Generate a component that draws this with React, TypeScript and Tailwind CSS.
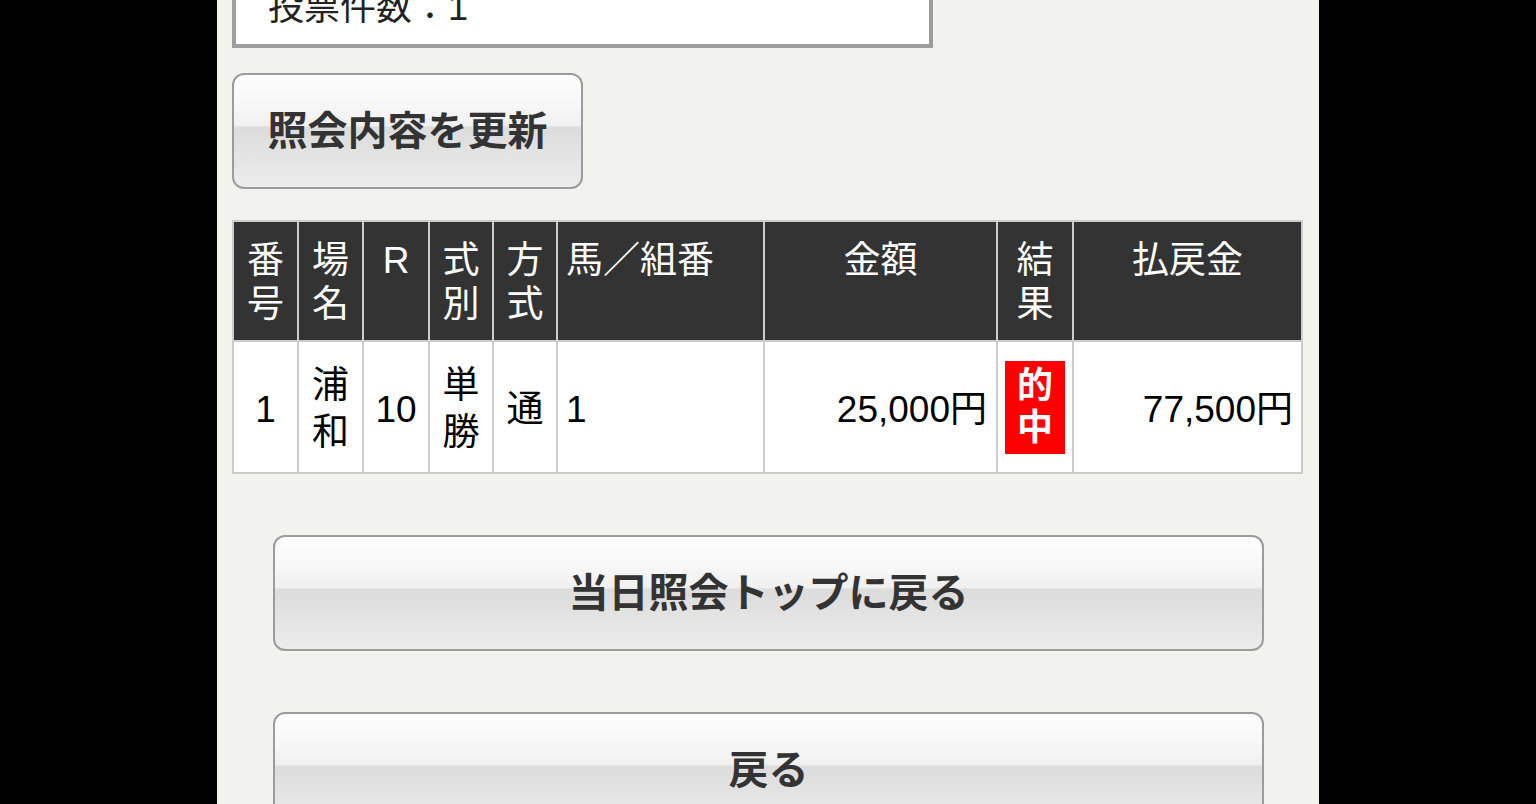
import React from "react";

const btnBg =
  "bg-[linear-gradient(to_bottom,#fefefe_0%,#f6f6f6_30%,#f0f0f0_45%,#dcdcdc_47%,#e3e3e3_70%,#ececec_100%)]";

function GlossButton({ label, className }: { label: string; className: string }) {
  return (
    <div
      className={`flex items-center justify-center rounded-[12px] border-2 border-[#9c9c9c] ${btnBg} text-[40px] font-bold leading-[48px] text-[#333333] ${className}`}
    >
      {label}
    </div>
  );
}

const head = "bg-[#333333] text-white text-[37px] leading-[44px] pt-[17px]";
const body = "bg-white text-black text-[37px] leading-[47px] flex items-center pt-[4px]";

export default function App() {
  return (
    <div className="min-h-[804px] h-[804px] overflow-hidden bg-black font-['Liberation_Sans','Noto_Sans_CJK_JP',sans-serif]">
      <div className="mx-auto flex h-full w-[1102px] flex-col bg-[#f2f2ee]">
        {/* top info box */}
        <div className="-mt-[40px] ml-[15px] h-[88px] w-[701px] shrink-0 border-4 border-[#9d9d9d] bg-white pl-[32px] pt-[22px] text-[36px] leading-[44px] text-[#222]">
          投票件数：1
        </div>

        <GlossButton label="照会内容を更新" className="ml-[15px] mt-[25px] h-[116px] w-[351px] shrink-0" />

        {/* table */}
        <div className="ml-[15px] mt-[31px] grid w-[1071px] shrink-0 grid-cols-[63px_63px_64px_62px_62px_205px_231px_74px_1fr] grid-rows-[118px_130px] gap-[2px] bg-[#cccccc] p-[2px]">
          <div className={`${head} text-center`}>番<br />号</div>
          <div className={`${head} text-center`}>場<br />名</div>
          <div className={`${head} text-center`}>R</div>
          <div className={`${head} text-center`}>式<br />別</div>
          <div className={`${head} text-center`}>方<br />式</div>
          <div className={`${head} pl-[8px]`}>馬／組番</div>
          <div className={`${head} text-center`}>金額</div>
          <div className={`${head} text-center`}>結<br />果</div>
          <div className={`${head} text-center`}>払戻金</div>

          <div className={`${body} justify-center`}>1</div>
          <div className={`${body} justify-center text-center`}>
            <span>浦<br />和</span>
          </div>
          <div className={`${body} justify-center`}>10</div>
          <div className={`${body} justify-center text-center`}>
            <span>単<br />勝</span>
          </div>
          <div className={`${body} justify-center`}>通</div>
          <div className={`${body} pl-[8px]`}>1</div>
          <div className={`${body} justify-end pr-[9px]`}>25,000円</div>
          <div className="flex items-center justify-center bg-white">
            <div className="flex h-[93px] w-[60px] flex-col items-center justify-center bg-[#ff0000] text-[36px] font-bold leading-[42px] text-white">
              <span>的</span>
              <span>中</span>
            </div>
          </div>
          <div className={`${body} justify-end pr-[8px]`}>77,500円</div>
        </div>

        <GlossButton label="当日照会トップに戻る" className="ml-[56px] mt-[61px] h-[116px] w-[991px] shrink-0" />
        <GlossButton label="戻る" className="ml-[56px] mt-[61px] h-[116px] w-[991px] shrink-0" />
      </div>
    </div>
  );
}
